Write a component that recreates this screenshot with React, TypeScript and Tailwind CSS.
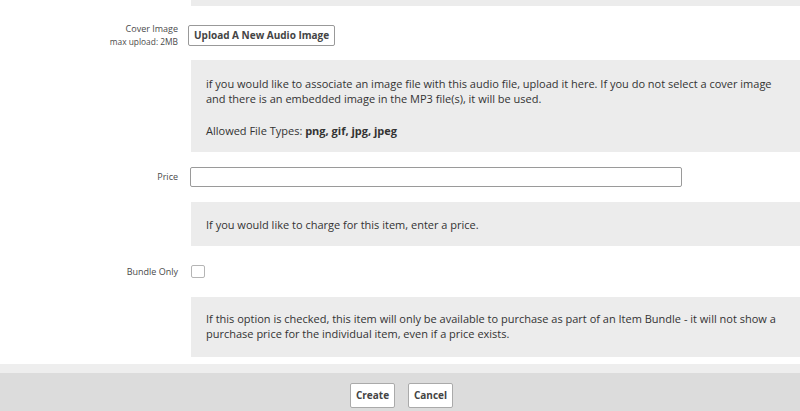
import React from 'react';

function FieldRow({ label, sub, h, children }: { label: string; sub?: string; h: string; children: React.ReactNode }) {
  return (
    <div className={`grid grid-cols-[178px_1fr] gap-x-3 ${h} ${sub ? 'items-start' : 'items-center'}`}>
      <div className="text-right text-[9px] leading-[14px] text-[#4a4a4a]">
        <div>{label}</div>
        {sub && <div className="text-[8.4px] leading-[12px]">{sub}</div>}
      </div>
      <div className="flex items-center h-full">{children}</div>
    </div>
  );
}

function HelpBox({ pad, children }: { pad: string; children: React.ReactNode }) {
  return (
    <div className={`ml-[191px] bg-[#ececec] px-[15px] ${pad} text-[11px] leading-[15px] text-[#333]`}>
      {children}
    </div>
  );
}

export default function App() {
  return (
    <div className="w-[800px] h-[411px] overflow-hidden bg-white font-['Open_Sans',sans-serif] flex flex-col">
      <div className="ml-[191px] h-[6px] shrink-0 bg-[#ececec]" />

      <div className="mt-[16px]">
        <FieldRow label="Cover Image" sub="max upload: 2MB" h="h-[21px]">
          <button className="-ml-[2px] h-[21px] px-[5px] border border-[#999] rounded-[2px] bg-white text-[10px] font-bold text-[#444] leading-none">
            Upload A New Audio Image
          </button>
        </FieldRow>
      </div>

      <div className="mt-[17px]">
        <HelpBox pad="pt-[16px] pb-[14px]">
          <p>
            if you would like to associate an image file with this audio file, upload it here. If you do not select a cover image
            and there is an embedded image in the MP3 file(s), it will be used.
          </p>
          <p className="mt-[17px]">
            Allowed File Types: <b>png, gif, jpg, jpeg</b>
          </p>
        </HelpBox>
      </div>

      <div className="mt-[15px]">
        <FieldRow label="Price" h="h-[20px]">
          <input type="text" className="w-[492px] h-[20px] border border-[#9a9a9a] rounded-[2px] bg-white" />
        </FieldRow>
      </div>

      <div className="mt-[15px]">
        <HelpBox pad="pt-[15px] pb-[14px]">
          <p>If you would like to charge for this item, enter a price.</p>
        </HelpBox>
      </div>

      <div className="mt-[15px]">
        <FieldRow label="Bundle Only" h="h-[21px]">
          <div className="ml-[1px] w-[14px] h-[13px] border border-[#b5b5b5] rounded-[2px] bg-white" />
        </FieldRow>
      </div>

      <div className="mt-[15px]">
        <HelpBox pad="pt-[14px] pb-[16px]">
          <p>
            If this option is checked, this item will only be available to purchase as part of an Item Bundle - it will not show a
            purchase price for the individual item, even if a price exists.
          </p>
        </HelpBox>
      </div>

      <div className="mt-[7px] h-[9px] shrink-0 bg-[#eeeeee]" />
      <div className="flex-1 bg-[#dcdcdc] pt-[10px] pl-[3px] flex justify-center items-start gap-[13px]">
        <button className="w-[45px] h-[25px] border border-[#aaa] rounded-[2px] bg-white text-[10px] font-bold text-[#444]">
          Create
        </button>
        <button className="w-[45px] h-[25px] border border-[#aaa] rounded-[2px] bg-white text-[10px] font-bold text-[#444]">
          Cancel
        </button>
      </div>
    </div>
  );
}
